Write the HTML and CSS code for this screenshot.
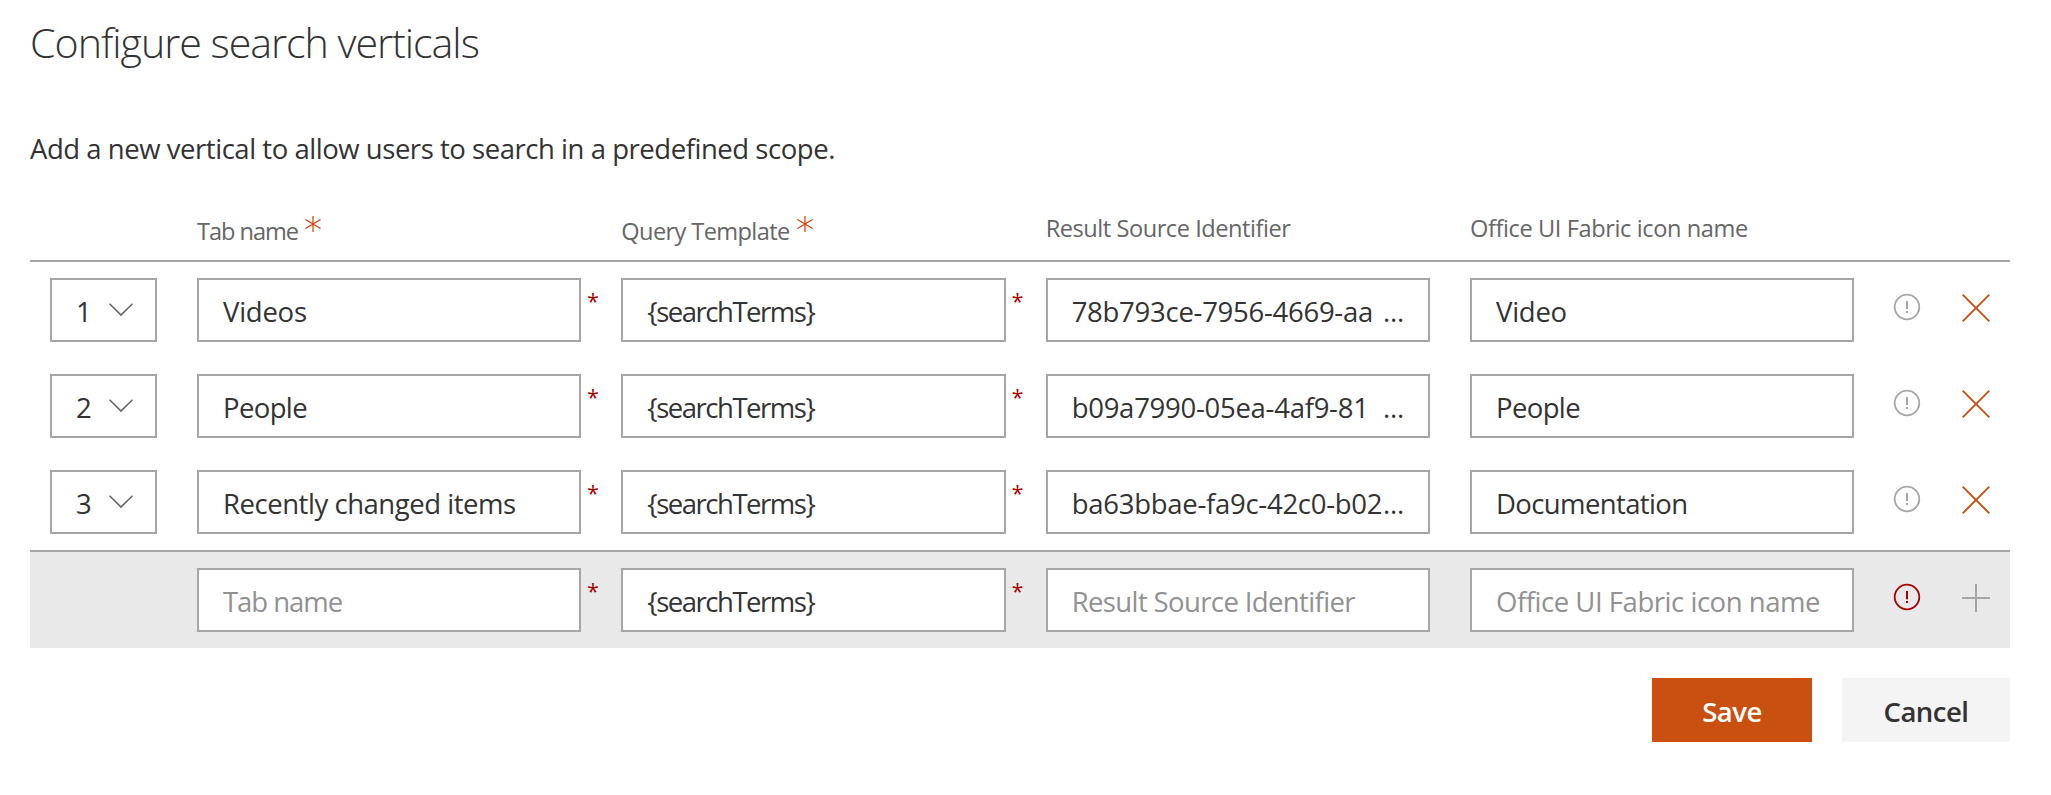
FILE: index.html
```html
<!DOCTYPE html>
<html lang="en">
<head>
<meta charset="utf-8">
<title>Configure search verticals</title>
<link rel="stylesheet" href="styles.css">
</head>
<body>
<svg class="defs" aria-hidden="true">
  <symbol id="chevron" viewBox="0 0 24 13"><path d="M.6.7 12 12.1 23.4.7" fill="none" stroke="currentColor" stroke-width="1.6"/></symbol>
  <symbol id="info" viewBox="0 0 28 28"><circle cx="14" cy="14" r="12.3" fill="none" stroke="currentColor" stroke-width="1.8"/><path d="M14 8v8.2M14 18v2" fill="none" stroke="currentColor" stroke-width="2"/></symbol>
  <symbol id="cross" viewBox="0 0 28 28"><path d="m.7.7 26.6 26.6M27.3.7.7 27.3" fill="none" stroke="currentColor" stroke-width="1.9"/></symbol>
  <symbol id="plus" viewBox="0 0 28 28"><path d="M14 0v28M0 14h28" fill="none" stroke="currentColor" stroke-width="2"/></symbol>
  <symbol id="star" viewBox="0 0 16 16"><path d="M8 0v16M.4 3.6l15.2 8.8M15.6 3.6.4 12.4" fill="none" stroke="currentColor" stroke-width="1.2"/></symbol>
</svg>
<main class="panel">
  <h1 class="title">Configure search verticals</h1>
  <p class="description">Add a new vertical to allow users to search in a predefined scope.</p>
  <div class="table">
    <div class="row head">
      <span></span>
      <div class="label required"><span class="tight">Tab name</span><svg class="star"><use href="#star"/></svg></div>
      <div class="label required"><span class="snug">Query Template</span><svg class="star"><use href="#star"/></svg></div>
      <div class="label">Result Source Identifier</div>
      <div class="label wide">Office UI Fabric icon name</div>
    </div>
    <div class="row">
      <div class="select"><span>1</span><svg class="chevron"><use href="#chevron"/></svg></div>
      <div class="field must"><span class="word">Videos</span></div>
      <div class="field must"><span class="token">{searchTerms}</span></div>
      <div class="field guid"><span>78b793ce-7956-4669-aa</span><span>...</span></div>
      <div class="field"><span class="word">Video</span></div>
      <div class="actions"><svg class="info"><use href="#info"/></svg><svg class="action"><use href="#cross"/></svg></div>
    </div>
    <div class="row">
      <div class="select"><span>2</span><svg class="chevron"><use href="#chevron"/></svg></div>
      <div class="field must"><span class="snug">People</span></div>
      <div class="field must"><span class="token">{searchTerms}</span></div>
      <div class="field guid"><span>b09a7990-05ea-4af9-81</span><span>...</span></div>
      <div class="field"><span class="snug">People</span></div>
      <div class="actions"><svg class="info"><use href="#info"/></svg><svg class="action"><use href="#cross"/></svg></div>
    </div>
    <div class="row">
      <div class="select"><span>3</span><svg class="chevron"><use href="#chevron"/></svg></div>
      <div class="field must">Recently changed items</div>
      <div class="field must"><span class="token">{searchTerms}</span></div>
      <div class="field guid"><span>ba63bbae-fa9c-42c0-b02</span><span>...</span></div>
      <div class="field"><span class="snug">Documentation</span></div>
      <div class="actions"><svg class="info"><use href="#info"/></svg><svg class="action"><use href="#cross"/></svg></div>
    </div>
    <div class="row new">
      <span></span>
      <div class="field must hint"><span class="tight">Tab name</span></div>
      <div class="field must"><span class="token">{searchTerms}</span></div>
      <div class="field hint"><span class="snug">Result Source Identifier</span></div>
      <div class="field hint">Office UI Fabric icon name</div>
      <div class="actions"><svg class="info error"><use href="#info"/></svg><svg class="action disabled"><use href="#plus"/></svg></div>
    </div>
  </div>
  <div class="buttons">
    <button class="button primary">Save</button>
    <button class="button">Cancel</button>
  </div>
</main>
</body>
</html>
```
FILE: styles.css
```css
* { box-sizing: border-box; }
body {
  margin: 0;
  background: #fff;
  color: #333;
  font: 400 27.5px/40px "Open Sans", "Noto Sans", sans-serif;
  letter-spacing: -0.46px;
}
.defs { display: none; }
.panel { width: 2010px; padding: 12px 0 0 30px; }
.title {
  margin: 0;
  font-size: 41.2px;
  font-weight: 300;
  line-height: 60px;
  letter-spacing: -1.03px;
}
.description { margin: 57px 0 31px; }
.row {
  display: grid;
  grid-template-columns: 107px repeat(4, 384.33px) 1fr;
  column-gap: 40px;
  height: 96px;
  padding: 16px 20px;
}
.head {
  height: 62px;
  padding-top: 13px;
  padding-bottom: 0;
  border-bottom: 2px solid #a6a6a6;
}
.label {
  color: #666;
  font-size: 23.6px;
  line-height: 30px;
}
.wide { letter-spacing: -0.4px; }
.required { display: flex; gap: 7px; padding-top: 3px; }
.star { width: 16px; height: 16px; color: #d83b01; }
.tight { letter-spacing: -1.05px; }
.snug { letter-spacing: -0.62px; }
.token { letter-spacing: -1.48px; }
.word { letter-spacing: -0.25px; }
.select, .field {
  display: flex;
  align-items: center;
  height: 64px;
  padding: 3px 24px 0;
  border: 2px solid #a6a6a6;
  background: #fff;
  white-space: nowrap;
}
.field { position: relative; }
.must::after {
  content: "*";
  position: absolute;
  top: 8px;
  left: calc(100% + 8px);
  color: #a80000;
  font-size: 21px;
  line-height: 27px;
}
.guid { justify-content: space-between; letter-spacing: -0.27px; }
.hint { color: #919191; }
.select { justify-content: space-between; padding-right: 22px; }
.chevron { width: 24px; height: 13px; margin-top: -4px; color: #666; }
.actions {
  display: flex;
  justify-content: space-between;
  padding-top: 15px;
}
.info { width: 28px; height: 28px; margin: 0 0 0 -1px; color: #a6a6a6; }
.error { color: #a80000; }
.action { width: 28px; height: 28px; margin-top: 1px; color: #ca5010; }
.disabled { color: #a6a6a6; }
.new {
  height: 98px;
  border-top: 2px solid #a6a6a6;
  background: #e9e9e9;
}
.buttons { display: flex; justify-content: flex-end; gap: 30px; margin-top: 30px; }
.button {
  width: 168px;
  height: 64px;
  padding: 3px 0 0;
  border: 0;
  background: #f4f4f4;
  color: #333;
  font: 600 27.5px/40px "Open Sans", "Noto Sans", sans-serif;
  letter-spacing: -0.5px;
}
.primary { width: 160px; background: #ca5010; color: #fff; }
```
